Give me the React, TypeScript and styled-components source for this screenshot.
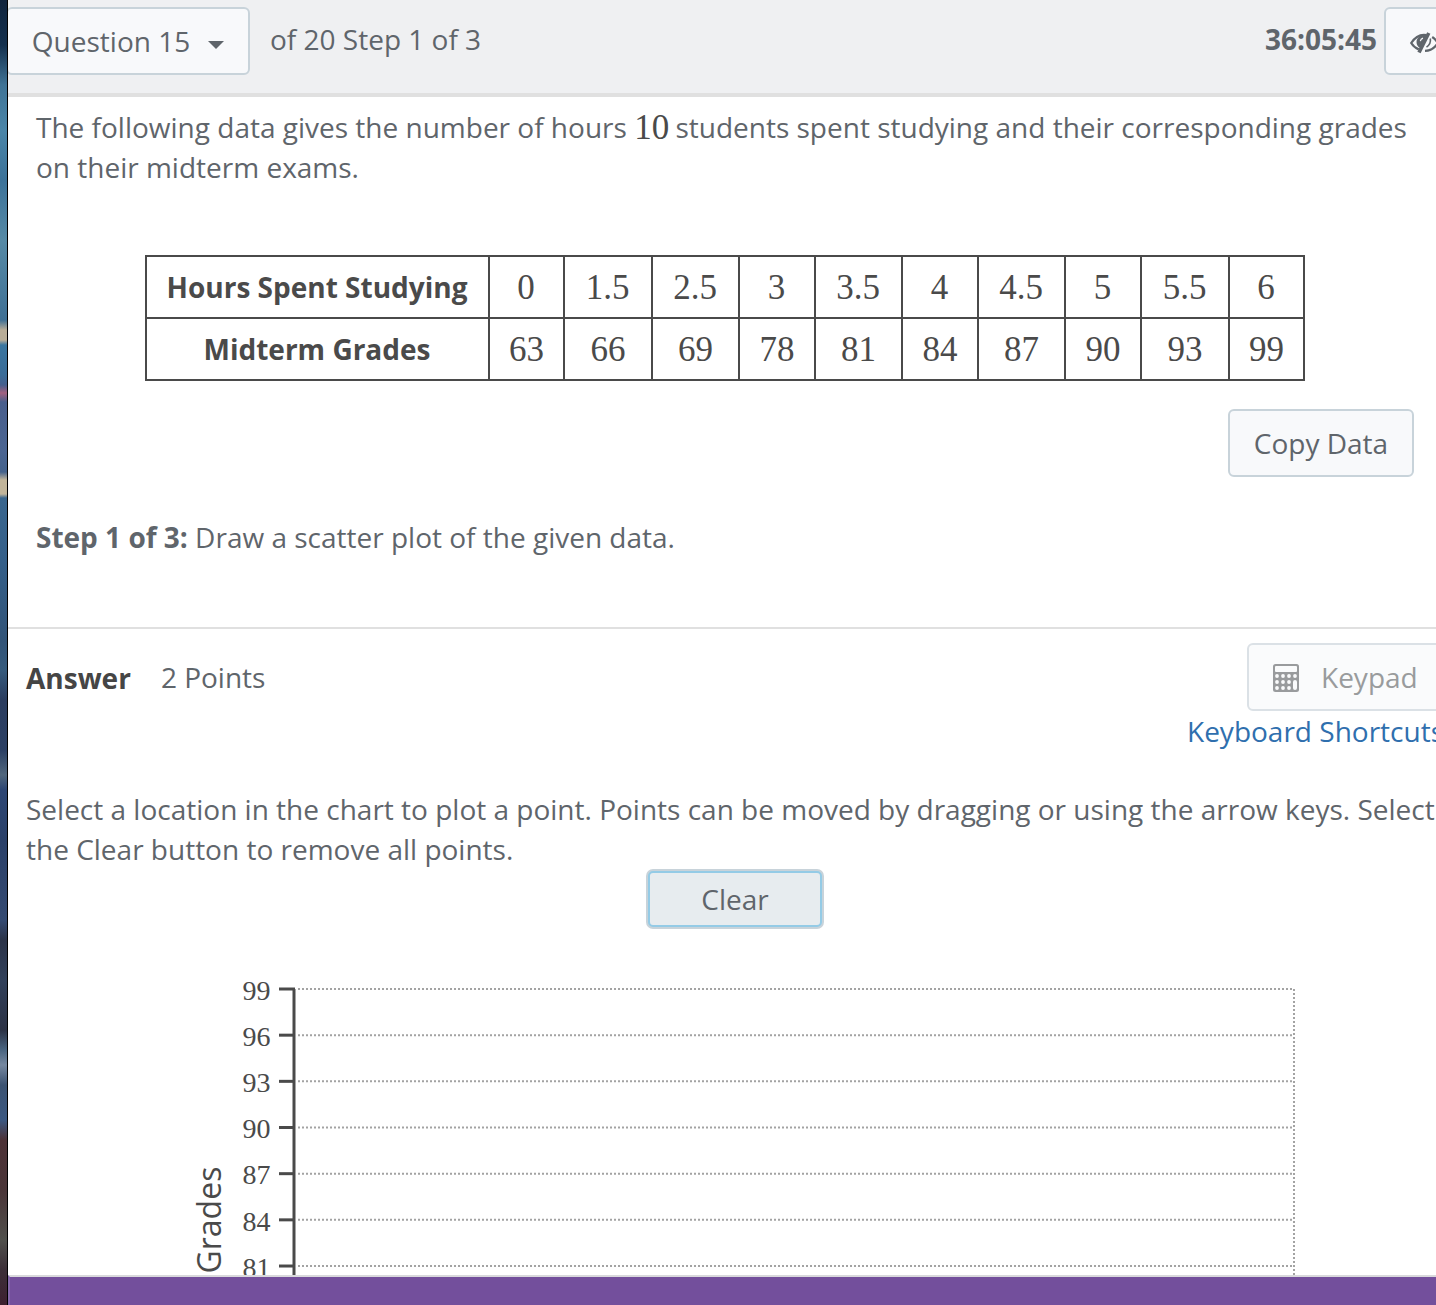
import styled, { createGlobalStyle } from "styled-components";

const GlobalStyle = createGlobalStyle`
  * {
    box-sizing: border-box;
  }

  body {
    margin: 0;
    background: #fff;
    color: #5f656b;
    font-family: "Open Sans", sans-serif;
    font-size: 28px;
    line-height: 40px;
    overflow: hidden;
  }
`;

const Page = styled.div`
  display: flex;
  width: 1436px;
  height: 1305px;
  overflow: hidden;
`;

//strip of the desktop that is visible next to the window
const Desktop = styled.div`
  flex: none;
  width: 8px;
  border-right: 1px solid #000;
  background: linear-gradient(
    #10243d 0px,
    #14304e 45px,
    #3f7396 85px,
    #4b86a9 130px,
    #3c7299 180px,
    #568aa6 240px,
    #3f7095 320px,
    #b9ad97 330px,
    #b9ad97 340px,
    #3a76a0 345px,
    #3a6c98 375px,
    #465f8e 385px,
    #a4607f 393px,
    #485e8c 402px,
    #4b6592 450px,
    #44628c 472px,
    #c2b59a 480px,
    #c2b59a 494px,
    #3a668e 498px,
    #35608a 560px,
    #325478 640px,
    #365b7d 670px,
    #2b3d5f 700px,
    #2c4064 750px,
    #51677d 775px,
    #2d4674 790px,
    #2b4169 840px,
    #344a72 920px,
    #2b3348 940px,
    #31405a 980px,
    #2c3245 1030px,
    #4a6581 1050px,
    #7688a0 1065px,
    #3c5372 1085px,
    #3b5882 1120px,
    #4d3237 1140px,
    #4a3538 1190px,
    #50504c 1240px,
    #3c2f38 1270px,
    #3d2030 1305px
  );
`;

const Window = styled.div`
  flex: 1;
  min-width: 0;
  display: flex;
  flex-direction: column;
  overflow: hidden;
`;

const Header = styled.header`
  flex: none;
  display: flex;
  align-items: flex-start;
  height: 97px;
  padding-top: 7px;
  background: #eff0f2;
  border-bottom: 4px solid #e0e0e0;
`;

const Button = styled.button<{ $width: number; $faded?: boolean }>`
  flex: none;
  display: flex;
  align-items: center;
  justify-content: center;
  width: ${(props) => props.$width}px;
  height: 68px;
  padding: 0;
  background: ${(props) => (props.$faded ? "#fafbfc" : "#f8f9fb")};
  border: 2px solid ${(props) => (props.$faded ? "#dbe1e6" : "#c8d3da")};
  border-radius: 6px;
  color: ${(props) => (props.$faded ? "#999b9d" : "#5f656b")};
  font: inherit;
`;

const QuestionButton = styled(Button)`
  margin-left: -2px;
  gap: 18px;
`;

const Caret = styled.span`
  margin-top: 7px;
  border: 8px solid transparent;
  border-top-color: #5f656b;
  border-bottom: 0;
`;

const StepCount = styled.span`
  margin: 12px auto 0 20px;
`;

const Timer = styled.strong`
  margin: 12px 7px 0 0;
`;

const EyeButton = styled(Button)`
  margin-right: -26px;
  justify-content: flex-start;
  padding: 2px 0 0 23px;
`;

const Question = styled.section`
  flex: none;
  height: 532px;
  padding: 10px 22px 0 28px;
  border-bottom: 2px solid #e0e0e0;
`;

const Paragraph = styled.p`
  margin: 0;
  white-space: nowrap;
`;

const MathText = styled.span`
  color: #4a4a4a;
  font-family: "Liberation Serif", serif;
  font-size: 35px;
  line-height: 1;
`;

const InlineMath = styled(MathText)`
  margin-right: -1px;
  vertical-align: -1px;
`;

const DataTable = styled.table`
  width: 1160px;
  margin: 68px 0 0 109px;
  border-collapse: collapse;
  table-layout: fixed;
  color: #4a4a4a;

  th,
  td {
    height: 62px;
    padding: 0;
    border: 2px solid #4a4a4a;
    text-align: center;
  }

  th {
    padding: 0 1px 0 0;
  }

  td {
    padding: 2px 1px 0 0;
  }

  tr + tr td {
    padding: 1px 0 0;
  }
`;

const CopyRow = styled.div`
  display: flex;
  justify-content: flex-end;
  margin: 28px 0 40px;
`;

const Answer = styled.section`
  flex: none;
  height: 646px;
  padding: 14px 0 0 18px;
  overflow: hidden;
`;

const AnswerBar = styled.div`
  display: flex;
  align-items: flex-start;
`;

const AnswerTitle = styled.strong`
  margin: 15px 30px 0 0;
  color: #454545;
`;

const Points = styled.span`
  margin: 14px auto 0 0;
`;

const KeypadButton = styled(Button)`
  margin-right: -10px;
  justify-content: flex-start;
  gap: 22px;
  padding-left: 24px;

  svg {
    margin-top: 2px;
  }
`;

const ShortcutsLink = styled.a`
  display: block;
  width: 252px;
  margin: 0 -3px 38px auto;
  color: #2f6fae;
  white-space: nowrap;
`;

const ClearButton = styled.button`
  display: block;
  width: 174px;
  height: 56px;
  margin: 2px auto 0 622px;
  padding: 0;
  background: #e7ecef;
  border: 2px solid #94cbe6;
  border-radius: 5px;
  box-shadow: 0 0 0 2px #c8d3da;
  color: #5f656b;
  font: inherit;
`;

const Chart = styled.svg`
  display: block;
  margin: 33px 0 0 154px;

  text {
    fill: #4a4a4a;
  }
`;

const TickLabel = styled.text`
  font-family: "Liberation Serif", serif;
  font-size: 28px;
  text-anchor: end;
`;

const AxisLabel = styled.text`
  font-size: 32px;
`;

const Footer = styled.footer`
  flex: 1;
  background: #734f9c;
  border-top: 2px solid #d9d9dc;
  border-left: 2px solid #8467aa;
`;

interface Column {
  hours: string;
  grade: number;
  width: number;
}

const columns: Column[] = [
  { hours: "0", grade: 63, width: 75 },
  { hours: "1.5", grade: 66, width: 88 },
  { hours: "2.5", grade: 69, width: 87 },
  { hours: "3", grade: 78, width: 76 },
  { hours: "3.5", grade: 81, width: 87 },
  { hours: "4", grade: 84, width: 76 },
  { hours: "4.5", grade: 87, width: 87 },
  { hours: "5", grade: 90, width: 76 },
  { hours: "5.5", grade: 93, width: 88 },
  { hours: "6", grade: 99, width: 75 },
];

const ticks = [99, 96, 93, 90, 87, 84, 81];

function EyeSlashIcon() {
  return (
    <svg width="30" height="24" viewBox="0 0 30 24" fill="none" stroke="#5f656b">
      <path d="M17.5 5C10.5 3.8 5.5 7.8 2.2 13c1.8 3 4 5 7.6 6.4" strokeWidth="2.2" />
      <path d="M18 5.2C12 4.2 7.5 7.3 7.5 12c0 2.6 1.2 4.9 3.7 6Z" fill="#5f656b" stroke="none" />
      <path d="M14 8.2a3.8 3.8 0 0 0-2.7 3" stroke="#f8f9fb" strokeWidth="1.2" />
      <path d="M19.8 3 10 22.5" strokeWidth="3.6" />
      <path d="M21.3 8.5c.6 3.4-.8 6.6-3.8 8.7" strokeWidth="1.6" />
      <path d="M23.2 7c2.4 1.5 4.2 3.5 5.6 6-2.8 4.8-7 7.8-12.8 7.9" strokeWidth="2.2" />
    </svg>
  );
}

function CalculatorIcon() {
  return (
    <svg width="26" height="28" viewBox="0 0 26 28">
      <rect width="26" height="28" rx="2.5" fill="#999b9d" />
      <rect x="2" y="2" width="22" height="6" rx="1" fill="#fafbfc" />
      {[12, 18, 24].map((y) =>
        [4, 10, 16, 22].map((x) =>
          x === 22 && y > 12 ? null : <circle key={`${x}-${y}`} cx={x} cy={y} r="1.9" fill="#fafbfc" />
        )
      )}
      <rect x="20" y="16" width="4" height="10" rx="2" fill="#fafbfc" />
    </svg>
  );
}

function ScatterChart() {
  return (
    <Chart width="1140" height="315" viewBox="180 960 1140 315">
      {ticks.map((tick, index) => {
        const y = 989 + index * 46.17;
        return (
          <g key={tick}>
            <line x1="298" x2="1292" y1={y} y2={y} stroke="#a3a3a3" strokeWidth="2" strokeDasharray="2 2" />
            <line x1="279" x2="295" y1={y} y2={y} stroke="#4a4a4a" strokeWidth="3" />
            <TickLabel x="270.5" y={y + 10.7}>
              {tick}
            </TickLabel>
          </g>
        );
      })}
      <line x1="294" x2="294" y1="989" y2="1275" stroke="#4a4a4a" strokeWidth="3" />
      <line x1="1294" x2="1294" y1="989" y2="1275" stroke="#a3a3a3" strokeWidth="2" strokeDasharray="2 2" />
      <AxisLabel transform="translate(220.5 1273.5) rotate(-90)">Grades</AxisLabel>
    </Chart>
  );
}

function App() {
  return (
    <>
      <GlobalStyle />
      <Page>
        <Desktop />
        <Window>
          <Header>
            <QuestionButton $width={244}>
              Question 15 <Caret />
            </QuestionButton>
            <StepCount>of 20 Step 1 of 3</StepCount>
            <Timer>36:05:45</Timer>
            <EyeButton $width={78} aria-label="Hide timer">
              <EyeSlashIcon />
            </EyeButton>
          </Header>

          <Question>
            <Paragraph>
              The following data gives the number of hours <InlineMath>10</InlineMath> students spent studying and their
              corresponding grades
              <br />
              on their midterm exams.
            </Paragraph>
            <DataTable>
              <colgroup>
                <col width={343} />
                {columns.map((column) => (
                  <col key={column.hours} width={column.width} />
                ))}
              </colgroup>
              <tbody>
                <tr>
                  <th>Hours Spent Studying</th>
                  {columns.map((column) => (
                    <td key={column.hours}>
                      <MathText>{column.hours}</MathText>
                    </td>
                  ))}
                </tr>
                <tr>
                  <th>Midterm Grades</th>
                  {columns.map((column) => (
                    <td key={column.hours}>
                      <MathText>{column.grade}</MathText>
                    </td>
                  ))}
                </tr>
              </tbody>
            </DataTable>
            <CopyRow>
              <Button $width={186}>Copy Data</Button>
            </CopyRow>
            <Paragraph>
              <strong>Step 1 of 3:</strong> Draw a scatter plot of the given data.
            </Paragraph>
          </Question>

          <Answer>
            <AnswerBar>
              <AnswerTitle>Answer</AnswerTitle>
              <Points>2 Points</Points>
              <KeypadButton $width={199} $faded>
                <CalculatorIcon /> Keypad
              </KeypadButton>
            </AnswerBar>
            <ShortcutsLink>Keyboard Shortcuts</ShortcutsLink>
            <Paragraph>
              Select a location in the chart to plot a point. Points can be moved by dragging or using the arrow keys.
              Select
              <br />
              the Clear button to remove all points.
            </Paragraph>
            <ClearButton>Clear</ClearButton>
            <ScatterChart />
          </Answer>
          <Footer />
        </Window>
      </Page>
    </>
  );
}

export default App;
